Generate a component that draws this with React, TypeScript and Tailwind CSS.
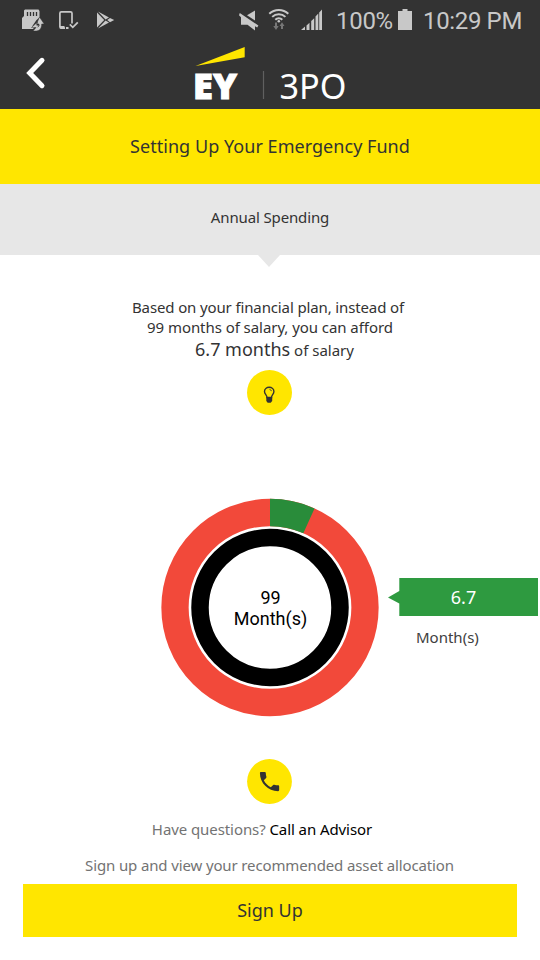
import React from "react";

const noto = "font-['Noto_Sans',sans-serif]";
const roboto = "font-['Roboto',sans-serif]";

function StatusBar() {
  return (
    <div className={`flex h-10 text-[#c8c8c8] ${roboto}`}>
      <svg className="h-10 w-[120px] shrink-0" viewBox="0 0 120 40" fill="#c8c8c8">
        <path d="M25 9.500h13.500l1 1.500v6.500l-3 2.500-4.500 6.500 2.500.5-1.500 2H22V18l2-2v-5.500z" />
        <path d="M27.500 12v4M30.500 12v4M33.500 12v4M36.500 12v4" stroke="#333" strokeWidth="1.300" />
        <path d="M39.500 17l4.700 7h-2.500c0 4.500-2 7-6.200 7H33l3-3.500h-4.500l6-5.500-.8 3.200h2.600l-1.500 2c1-.8 1.200-1.700 1.200-3.200h-2.500z" stroke="#333" strokeWidth=".5" />
        <path d="M65 28.200h-3.700c-1 0-1.400-.5-1.400-1.400V13.300c0-1 .5-1.400 1.400-1.400h9.200c1 0 1.500.5 1.500 1.400V23.500" fill="none" stroke="#c8c8c8" strokeWidth="1.700" />
        <path d="M60 26h4.500v2.500H60zM66 27h2.500v2H66z" />
        <path d="M69.800 24.300l3 3 5-5" fill="none" stroke="#c8c8c8" strokeWidth="1.800" />
        <path d="M97 12.500l7.200 7.500-7.200 7.500z" />
        <path d="M98 11.500l11 6-3.500 2zM98 28.500l11-6-3.500-2zM110 18l4.200 2-4.200 2.200-2.800-2.200z" />
      </svg>
      <svg className="ml-[115px] h-10 w-[90px] shrink-0" viewBox="235 0 90 40" fill="#c8c8c8">
        <path d="M239.800 13l18.600 12.500-1.200 2-2.200-1.300v4.300l-7.500-5.700H241v-7.500l-2-2z" />
        <path d="M247 15.200l8-4.700v10z" />
        <g fill="none" stroke="#c8c8c8" strokeWidth="2">
          <path d="M269.300 13.800a13.500 13.500 0 0 1 19 0M272.200 16.900a9.300 9.300 0 0 1 13.200 0M275.300 19.800a5 5 0 0 1 7 0" />
        </g>
        <circle cx="278.800" cy="21.300" r="1.300" />
        <path d="M275 22.500h2v3.500h1.700l-2.700 4-2.700-4h1.700zM281 29h2v-3h1.500l-2.500-3.800-2.500 3.800h1.500z" fill="#777" />
        <path d="M301 30l4-3.500V30zM306.500 25.500l3-2.800V30h-3zM311.200 21l3-2.800V30h-3zM315.500 16.500l2.800-3V30h-2.800zM319.200 12.500l2.800-3V30h-2.800z" />
      </svg>
      <span className="ml-[11px] w-[58px] whitespace-nowrap text-[24px] leading-[42px] tracking-[-0.3px]">100%</span>
      <svg className="ml-[3px] h-10 w-[16px] shrink-0" viewBox="397 0 16 40" fill="#c8c8c8">
        <path d="M402.500 9h5v2h4.500v19h-14V11h4.500z" />
      </svg>
      <span className="ml-[10px] whitespace-nowrap text-[24px] leading-[42px] tracking-[-0.35px]">10:29 PM</span>
    </div>
  );
}

function BrandBar() {
  return (
    <div className="flex h-[69px]">
      <svg className="ml-5 h-[69px] w-[30px]" viewBox="20 40 30 69" fill="none" stroke="#fff" strokeWidth="5" strokeLinecap="round" strokeLinejoin="miter">
        <path d="M42 60.300L29.700 73l12.300 12.700" />
      </svg>
      <svg className="ml-[140px] h-[69px] w-[160px]" viewBox="190 40 160 69">
        <path d="M195.500 66L244.700 47v10.200z" fill="#ffe600" />
        <text x="193" y="98.600" textLength="44" lengthAdjust="spacingAndGlyphs" fill="#fff" stroke="#fff" strokeWidth="1" className={`text-[35px] font-black ${noto}`}>EY</text>
        <path d="M263.500 71v28" stroke="#606060" strokeWidth="1.200" />
        <text x="279.500" y="98.500" textLength="67" lengthAdjust="spacingAndGlyphs" fill="#fff" className={`text-[34px] ${noto}`}>3PO</text>
      </svg>
    </div>
  );
}

function Donut() {
  const circumference = 2 * Math.PI * 95.25;
  return (
    <div className="ml-[160px] grid h-[220px] w-[220px] shrink-0 place-items-center">
      <svg className="col-start-1 row-start-1 h-[220px] w-[220px]" viewBox="0 0 220 220" fill="none">
        <circle cx="110" cy="109.500" r="95" stroke="#f2493a" strokeWidth="27.300" />
        <circle cx="110" cy="109.500" r="95" stroke="#298c3a" strokeWidth="27.300" strokeDasharray={`${circumference * 0.067} ${circumference}`} transform="rotate(-90 110 109.500)" />
        <circle cx="110" cy="109.500" r="70" stroke="#000" strokeWidth="17.500" />
      </svg>
      <div className={`col-start-1 row-start-1 pl-px text-center text-[18px] leading-[21px] text-black ${roboto}`}>
        99
        <br />
        Month(s)
      </div>
    </div>
  );
}

function Callout() {
  return (
    <div className="ml-2 mt-[80px] w-[150px]">
      <div className="flex h-[38px]">
        <svg className="h-[38px] w-[12px]" viewBox="0 0 12 38" fill="#2e9a40">
          <path d="M12 0v38h-.7V25.500L0 19.500l11.300-6.500V0z" />
        </svg>
        <div className="flex-1 bg-[#2e9a40] pr-[11px] text-center text-[18px] leading-[39px] text-white">6.7</div>
      </div>
      <div className="pl-[28px] text-[15px] leading-[43px] text-[#404040]">Month(s)</div>
    </div>
  );
}

export default function App() {
  return (
    <div className={`flex h-[960px] w-[540px] flex-col overflow-hidden bg-white text-[#333] ${noto}`}>
      <header className="h-[109px] shrink-0 bg-[#333]">
        <StatusBar />
        <BrandBar />
      </header>
      <h1 className="h-[75px] shrink-0 bg-[#ffe600] text-center text-[18px] leading-[75px] tracking-[0.04px]">Setting Up Your Emergency Fund</h1>
      <div className="h-[71px] shrink-0 bg-[#e7e7e7] text-center text-[15px] leading-[67px] tracking-[-0.13px]">Annual Spending</div>
      <svg className="ml-[257px] h-[13px] w-[24px] shrink-0" viewBox="0 0 24 13">
        <path d="M1 0h22L12 12z" fill="#e7e7e7" />
      </svg>
      <div className="mt-[29px] h-[73px] shrink-0 whitespace-nowrap text-center text-[15px] leading-5">
        <p className="pr-1 tracking-[-0.13px]">Based on your financial plan, instead of</p>
        <p className="tracking-[-0.06px]">99 months of salary, you can afford</p>
        <p className="pl-[9px] leading-6">
          <span className="text-[18px]">6.7 months</span> of salary
        </p>
      </div>
      <svg className="ml-[247px] h-[45px] w-[45px] shrink-0" viewBox="247 370 45 45">
        <circle cx="269.500" cy="392.500" r="22.500" fill="#ffe600" />
        <path d="M267 397.500c0-2.500-2.500-3.300-2.500-6a4.700 4.200 0 0 1 9.400 0c0 2.700-2.400 3.500-2.400 6z" fill="none" stroke="#333" strokeWidth="1.400" />
        <path d="M266.300 397h5.900v4l-1.500 1.800h-3l-1.400-1.800z" fill="#333" />
        <path d="M269.500 389.300l2.200 1.500" stroke="#333" strokeWidth=".9" />
      </svg>
      <div className="mt-[83px] flex h-[220px] shrink-0">
        <Donut />
        <Callout />
      </div>
      <svg className="ml-[247px] mt-[41px] h-[45px] w-[45px] shrink-0" viewBox="0 0 45 45">
        <circle cx="22.500" cy="22.500" r="22.400" fill="#ffe600" />
        <path transform="translate(9.700 9.700) scale(1.070)" d="M6.620 10.790c1.440 2.830 3.760 5.140 6.590 6.590l2.200-2.200c.27-.27.670-.36 1.020-.24 1.120.37 2.330.57 3.570.57.550 0 1 .45 1 1V20c0 .55-.45 1-1 1-9.390 0-17-7.610-17-17 0-.55.450-1 1-1h3.500c.55 0 1 .45 1 1 0 1.250.2 2.450.57 3.570.11.350.03.740-.25 1.020l-2.200 2.200z" fill="#333" />
      </svg>
      <p className="mt-[15px] h-[20px] shrink-0 pr-4 text-center text-[15px] leading-[20px] tracking-[-0.08px] text-[#737373]">
        Have questions? <span className="text-black">Call an Advisor</span>
      </p>
      <p className="mt-4 h-[20px] shrink-0 pr-px text-center text-[15px] leading-[20px] tracking-[-0.13px] text-[#737373]">Sign up and view your recommended asset allocation</p>
      <button className="mx-[23px] mt-[9px] h-[53px] shrink-0 bg-[#ffe600] text-[18px] leading-[53px]">Sign Up</button>
    </div>
  );
}
